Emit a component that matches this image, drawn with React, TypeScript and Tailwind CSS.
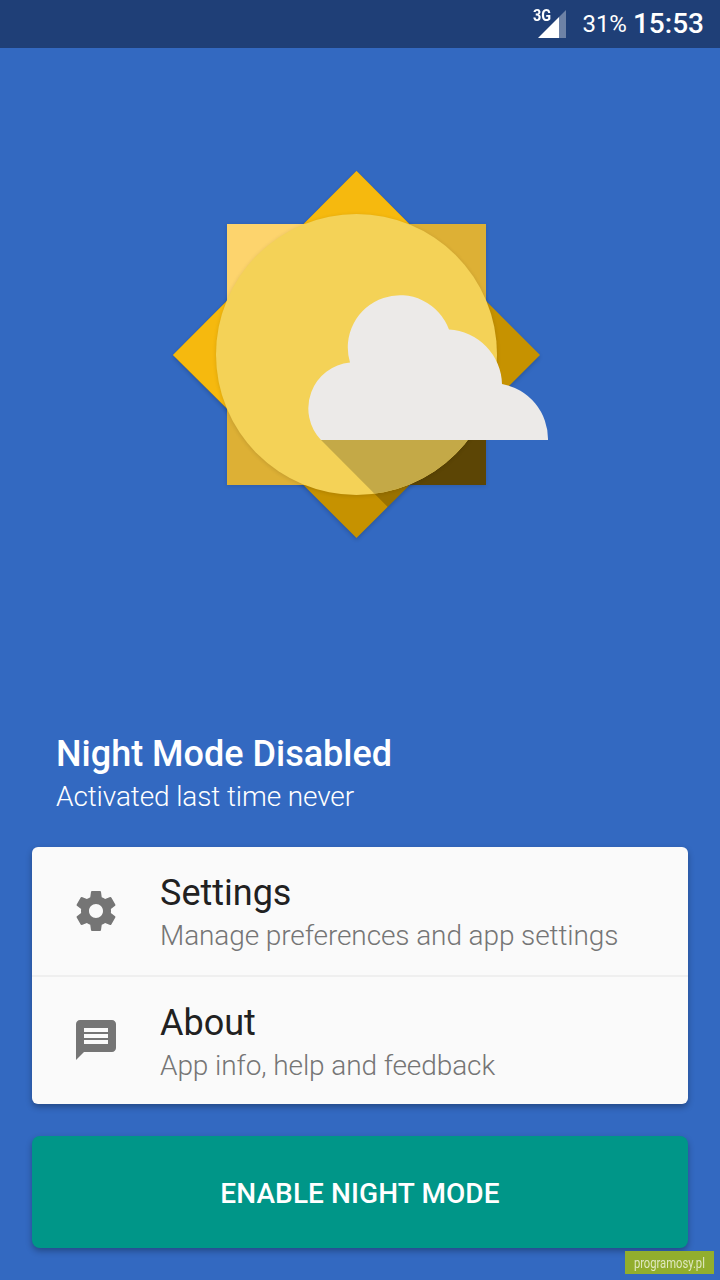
import React from 'react';

const GEAR =
  'M19.43 12.98c.04-.32.07-.64.07-.98s-.03-.66-.07-.98l2.11-1.65c.19-.15.24-.42.12-.64l-2-3.46c-.12-.22-.39-.3-.61-.22l-2.49 1c-.52-.4-1.08-.73-1.69-.98l-.38-2.65C14.46 2.18 14.25 2 14 2h-4c-.25 0-.46.18-.49.42l-.38 2.65c-.61.25-1.17.59-1.69.98l-2.49-1c-.23-.09-.49 0-.61.22l-2 3.46c-.13.22-.07.49.12.64l2.11 1.65c-.04.32-.07.65-.07.98s.03.66.07.98l-2.11 1.65c-.19.15-.24.42-.12.64l2 3.46c.12.22.39.3.61.22l2.49-1c.52.4 1.08.73 1.69.98l.38 2.65c.03.24.24.42.49.42h4c.25 0 .46-.18.49-.42l.38-2.65c.61-.25 1.17-.59 1.69-.98l2.49 1c.23.09.49 0 .61-.22l2-3.46c.12-.22.07-.49-.12-.64l-2.11-1.65zM12 15.5c-1.93 0-3.5-1.57-3.5-3.5s1.57-3.5 3.5-3.5 3.5 1.57 3.5 3.5-1.57 3.5-3.5 3.5z';
const MESSAGE =
  'M20 2H4c-1.1 0-1.99.9-1.99 2L2 22l4-4h14c1.1 0 2-.9 2-2V4c0-1.1-.9-2-2-2zm-2 12H6v-2h12v2zm0-3H6V9h12v2zm0-3H6V6h12v2z';

const SunLogo = () => (
  <svg viewBox="160 160 400 390" className="w-[400px] h-[390px] block">
    <defs>
      <filter id="soft" x="-10%" y="-10%" width="120%" height="120%">
        <feGaussianBlur stdDeviation="2" />
      </filter>
      <clipPath id="diamondClip">
        <polygon points="356.5,171 540,355 356.5,538 173,355" />
      </clipPath>
      <clipPath id="circleClip">
        <circle cx="356.5" cy="354.5" r="140.5" />
      </clipPath>
    </defs>

    {/* Diamond */}
    <polygon points="356.5,173 540,357 356.5,540 173,357" fill="#000" opacity="0.18" filter="url(#soft)" />
    <polygon points="356.5,171 540,355 356.5,538 173,355" fill="#c69200" />
    <polygon points="356.5,171 448,263 265,446 173,355" fill="#f6b90e" />
    <polygon points="321,440 560,440 560,680" fill="#000" opacity="0.22" clipPath="url(#diamondClip)" />

    {/* Square */}
    <rect x="227" y="225" width="259" height="261" fill="#000" opacity="0.12" filter="url(#soft)" />
    <rect x="227" y="224" width="259" height="261" fill="#ddb035" />
    <rect x="227" y="224" width="130" height="130" fill="#fdd46d" />
    <polygon points="321,440 486,440 486,485 366,485" fill="#5c4505" />

    {/* Circle */}
    <circle cx="356.5" cy="355.5" r="140.5" fill="#000" opacity="0.12" filter="url(#soft)" />
    <circle cx="356.5" cy="354.5" r="140.5" fill="#f4d257" />
    <polygon points="321,440 560,440 560,680" fill="#c4a947" clipPath="url(#circleClip)" />

    {/* Cloud */}
    <path
      d="M321 440A46 46 0 0 1 350 362.5A52.2 52.2 0 0 1 449 329.5A56 56 0 0 1 502 384A56 56 0 0 1 548 440Z"
      fill="#eceae8"
    />
  </svg>
);

const MenuRow = ({ icon, title, subtitle }: { icon: string; title: string; subtitle: string }) => (
  <div className="flex items-center h-[128px] pl-10">
    <svg viewBox="0 0 24 24" className="w-12 h-12 fill-[#757575] shrink-0">
      <path d={icon} />
    </svg>
    <div className="ml-10 flex flex-col pt-1">
      <span className="text-[36px] leading-[44px] text-[#212121]">{title}</span>
      <span className="text-[28px] leading-[36px] mt-[3px] font-light tracking-[-0.1px] text-[#757575]">{subtitle}</span>
    </div>
  </div>
);

export default function App() {
  return (
    <div
      className="relative w-[720px] h-[1280px] overflow-hidden bg-[#3369c1] text-white flex flex-col"
      style={{ fontFamily: 'Roboto, sans-serif' }}
    >
      {/* Status bar */}
      <div className="h-12 bg-[#1f3f77] flex items-center justify-end pr-4 shrink-0">
        <div className="relative w-[36px] h-[48px] mr-[15px]">
          <span className="absolute left-[2px] top-[8px] text-[16px] leading-[16px] font-bold scale-x-90 origin-left">3G</span>
          <svg viewBox="0 0 28 28" className="absolute left-[7px] top-[10px] w-[28px] h-[28px]">
            <polygon points="0,28 21,7 21,28" fill="#fff" />
            <polygon points="21,7 28,0 28,28 21,28" fill="#fff" opacity="0.35" />
          </svg>
        </div>
        <span className="text-[24px] leading-none mr-[6px]">31%</span>
        <span className="text-[28px] leading-none font-medium">15:53</span>
      </div>

      {/* Logo */}
      <div className="mt-[112px] ml-[160px] shrink-0">
        <SunLogo />
      </div>

      {/* Heading */}
      <div className="mt-[184px] pl-14">
        <div className="text-[36px] leading-[40px] font-medium">Night Mode Disabled</div>
        <div className="text-[28px] leading-[36px] mt-[5px] font-light tracking-[-0.12px]">Activated last time never</div>
      </div>

      {/* Menu card */}
      <div className="mx-8 mt-[32px] h-[257px] bg-[#fafafa] rounded-[6px] shadow-[0_3px_6px_rgba(0,0,0,0.3)] flex flex-col">
        <MenuRow icon={GEAR} title="Settings" subtitle="Manage preferences and app settings" />
        <div className="h-[2px] bg-[#efefef]" />
        <MenuRow icon={MESSAGE} title="About" subtitle="App info, help and feedback" />
      </div>

      {/* Action button */}
      <div className="mx-8 mt-8 h-[112px] pt-1 bg-[#009688] rounded-[8px] shadow-[0_3px_6px_rgba(0,0,0,0.3)] flex items-center justify-center text-[28px] tracking-[0.1px] font-medium">
        ENABLE NIGHT MODE
      </div>

      {/* Watermark */}
      <div className="absolute left-[625px] top-[1251px] w-[89px] h-[23px] bg-[#92ae2d] flex items-center justify-center text-[14px] leading-none text-[#dfe8c0]">
        <span className="inline-block scale-x-[0.8] whitespace-nowrap">programosy.pl</span>
      </div>
    </div>
  );
}
